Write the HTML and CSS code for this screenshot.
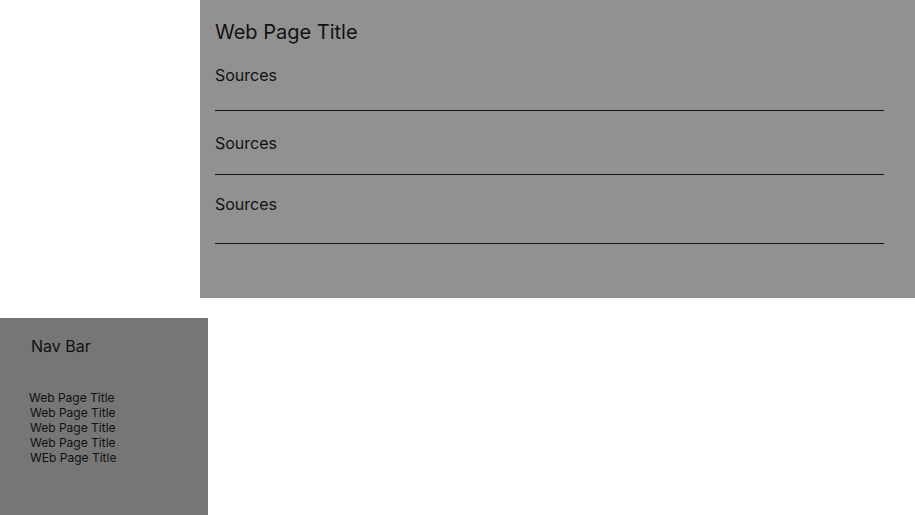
FILE: index.html
```html
<!DOCTYPE html>
<html lang="en">
<head>
  <meta charset="UTF-8">
  <meta name="viewport" content="width=device-width, initial-scale=1.0">
  <title>Web Page Title</title>
  <link rel="stylesheet" href="styles.css">
</head>
<body>

  <!-- main content panel -->
  <main class="content">
    <h1 class="page-title">Web Page Title</h1>
    <div class="source-row first">Sources</div>
    <div class="source-row">Sources</div>
    <div class="source-row last">Sources</div>
  </main>

  <!-- side nav -->
  <nav class="nav-bar">
    <h2 class="nav-heading">Nav Bar</h2>
    <ul class="nav-list">
      <li>Web Page Title</li>
      <li>Web Page Title</li>
      <li>Web Page Title</li>
      <li>Web Page Title</li>
      <li>WEb Page Title</li>
    </ul>
  </nav>

</body>
</html>
```

FILE: styles.css
```css
/* base */
body {
  margin: 0;
  padding: 0;
  background-color: #fff;
  color: #111;
  font-family: 'Inter', 'Liberation Sans', sans-serif;
}

.content {
  display: flex;
  flex-direction: column;
  margin-left: 200px;
  height: 298px;
  padding: 20px 31px 0 15px;
  box-sizing: border-box;
  background-color: #919191;
}

.page-title {
  margin: 0;
  font-size: 20px;
  font-weight: 400;
  line-height: normal;
}

.source-row {
  padding: 22px 0 21px;
  font-size: 16px;
  line-height: normal;
  border-bottom: 1px solid #141414;
}

.source-row.first {
  padding: 21px 0 25px;
}

.source-row.last {
  padding: 19px 0 29px;
}

/* nav panel */
.nav-bar {
  width: 208px;
  height: 197px;
  margin-top: 20px;
  padding: 18px 0 0 30px;
  box-sizing: border-box;
  background-color: #767676;
}

.nav-heading {
  margin: 0 0 0 1px;
  font-size: 16px;
  font-weight: 400;
  line-height: normal;
}

.nav-list {
  list-style: none;
  margin: 34px 0 0 -1px;
  padding: 0;
  font-size: 12px;
  line-height: 15px;
}

.nav-list li + li {
  margin-left: 1px;
}
```
